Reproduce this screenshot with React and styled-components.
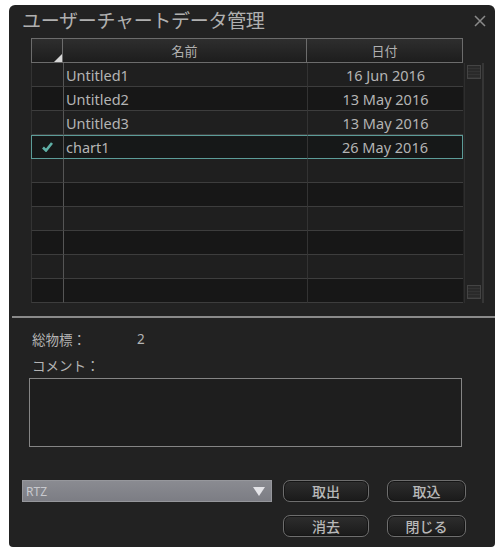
import styled, { createGlobalStyle } from "styled-components";

const GlobalStyle = createGlobalStyle`
  html, body {
    margin: 0;
    padding: 0;
    background: #ffffff;
  }
  body {
    font-family: "Noto Sans", "Noto Sans CJK JP", sans-serif;
  }
`;

const Page = styled.div`
  width: 498px;
  height: 548px;
  padding: 5px 3px 0 9px;
  box-sizing: border-box;
`;

const Dialog = styled.div`
  width: 486px;
  height: 542px;
  background: #222222;
  border-radius: 6px 6px 4px 4px;
  display: flex;
  flex-direction: column;
  color: #b8b8b8;
`;

const TitleBar = styled.div`
  height: 33px;
  display: flex;
  align-items: center;
  justify-content: space-between;
  padding: 0 9px 4px 13px;
  box-sizing: border-box;
`;

const Title = styled.div`
  font-family: "Noto Sans CJK JP", sans-serif;
  font-size: 19px;
  color: #b0b0b0;
  letter-spacing: -0.3px;
`;

const Close = styled.div`
  width: 12px;
  height: 12px;
  display: flex;
  margin-top: 2px;
`;

const TableArea = styled.div`
  display: flex;
  margin-left: 22px;
`;

const Table = styled.div`
  width: 432px;
  display: grid;
  grid-template-columns: 32px 244px 156px;
`;

const HeadCell = styled.div`
  height: 25px;
  box-sizing: border-box;
  border: 1px solid #6c6c6c;
  border-left-width: ${(p) => (p.first ? "1px" : "0")};
  background: linear-gradient(#2e2e2e, #1d1d1d);
  display: flex;
  align-items: ${(p) => (p.corner ? "flex-end" : "center")};
  justify-content: ${(p) => (p.corner ? "flex-end" : "center")};
  font-family: "Noto Sans CJK JP", sans-serif;
  font-size: 13px;
  color: #b0b0b0;
`;

const Cell = styled.div`
  height: 24px;
  box-sizing: border-box;
  background: ${(p) => (p.odd ? "#1f1f1f" : "#171717")};
  border-bottom: 1px solid #3d3d3d;
  border-left: 1px solid ${(p) => p.divider};
  display: flex;
  align-items: center;
  justify-content: ${(p) => p.align || "flex-start"};
  padding-left: ${(p) => (p.pad ? "2px" : "0")};
  font-size: 14.5px;
  color: #b4b4b4;
  white-space: nowrap;
  ${(p) =>
    p.selected &&
    `
    background: #161818;
    border-top: 1px solid #5c9c98;
    border-bottom: 1px solid #5c9c98;
  `}
  ${(p) => p.selected && p.col === 0 && `border-left: 1px solid #5c9c98; padding-left: 10px;`}
  ${(p) => p.selected && p.col === 2 && `border-right: 1px solid #5c9c98;`}
`;

const Scrollbar = styled.div`
  width: 20px;
  height: 240px;
  margin-top: 25px;
  margin-left: 1px;
  box-sizing: border-box;
  border-left: 1px solid #2e2e2e;
  border-right: 2px solid #363636;
  display: flex;
  flex-direction: column;
  justify-content: space-between;
  align-items: center;
  padding: 2px 0 4px;
`;

const ScrollBox = styled.div`
  width: 14px;
  height: 14px;
  box-sizing: border-box;
  border: 1px solid #444;
  background: repeating-linear-gradient(#2a2a2a 0 2px, #333 2px 3px);
`;

const Separator = styled.div`
  height: 2px;
  background: #8a8a8a;
  margin: 13px 0 0 3px;
`;

const Info = styled.div`
  padding: 11px 0 0 23px;
  font-family: "Noto Sans", "Noto Sans CJK JP", sans-serif;
  font-size: 13.5px;
  color: #b4b4b4;
`;

const InfoRow = styled.div`
  display: flex;
  height: ${(p) => p.h || 19}px;
  margin-top: ${(p) => p.gap || 0}px;
  align-items: center;
`;

const Label = styled.span`
  width: ${(p) => p.w || "auto"};
`;

const CommentBox = styled.div`
  width: 433px;
  height: 69px;
  box-sizing: border-box;
  margin: 1px 0 0 20px;
  border: 1px solid #858585;
  background: #1e1e1e;
`;

const Footer = styled.div`
  display: grid;
  grid-template-columns: 250px 86px 86px;
  grid-template-rows: 22px 22px;
  column-gap: 11px;
  row-gap: 13px;
  margin: 33px 0 0 13px;
`;

const Select = styled.div`
  background: linear-gradient(#8a8b91, #7c7d84);
  border: 1px solid #96979c;
  box-sizing: border-box;
  display: flex;
  align-items: center;
  justify-content: space-between;
  padding: 0 6px 0 3px;
  font-size: 12px;
  color: #c8c9ce;
`;

const Button = styled.div`
  box-sizing: border-box;
  border: 1px solid #6e6e6e;
  border-radius: 7px;
  background: linear-gradient(#2e2e2e, #1a1a1a);
  box-shadow: inset 0 0 0 1px #151515;
  display: flex;
  align-items: center;
  justify-content: center;
  font-family: "Noto Sans CJK JP", sans-serif;
  font-size: 14px;
  font-weight: 500;
  color: #b8b8b8;
  grid-column: ${(p) => p.col};
  grid-row: ${(p) => p.row};
  margin-left: ${(p) => p.shift || 0}px;
`;

const rows = [
  { name: "Untitled1", date: "16 Jun 2016" },
  { name: "Untitled2", date: "13 May 2016" },
  { name: "Untitled3", date: "13 May 2016" },
  { name: "chart1", date: "26 May 2016", selected: true },
  {}, {}, {}, {}, {}, {},
];

const Check = () => (
  <svg width="11" height="10" viewBox="0 0 11 10">
    <path d="M1 5.5 L4 8.5 L10 1" stroke="#5fb0a6" strokeWidth="2.6" fill="none" />
  </svg>
);

const App = () => {
  return (
    <Page>
      <GlobalStyle />
      <Dialog>
        <TitleBar>
          <Title>ユーザーチャートデータ管理</Title>
          <Close>
            <svg width="12" height="12" viewBox="0 0 12 12">
              <path d="M1 1 L11 11 M11 1 L1 11" stroke="#8a8a8a" strokeWidth="1.5" />
            </svg>
          </Close>
        </TitleBar>

        <TableArea>
          <Table>
            <HeadCell first corner>
              <svg width="8" height="8" viewBox="0 0 8 8">
                <path d="M8 0 L8 8 L0 8 Z" fill="#d8d8d8" />
              </svg>
            </HeadCell>
            <HeadCell>名前</HeadCell>
            <HeadCell>日付</HeadCell>
            {rows.map((r, i) => {
              const odd = i % 2 === 0;
              return [
                <Cell key={`c${i}`} odd={odd} divider="#333" selected={r.selected} col={0}>
                  {r.selected && <Check />}
                </Cell>,
                <Cell key={`n${i}`} odd={odd} divider="#555" pad selected={r.selected} col={1}>
                  {r.name}
                </Cell>,
                <Cell key={`d${i}`} odd={odd} divider="#333" align="center" selected={r.selected} col={2}>
                  {r.date}
                </Cell>,
              ];
            })}
          </Table>
          <Scrollbar>
            <ScrollBox />
            <ScrollBox />
          </Scrollbar>
        </TableArea>

        <Separator />

        <Info>
          <InfoRow>
            <Label w="105px">総物標：</Label>
            <span>2</span>
          </InfoRow>
          <InfoRow h={24} gap={5}>
            <Label>コメント：</Label>
          </InfoRow>
        </Info>
        <CommentBox />

        <Footer>
          <Select>
            <span>RTZ</span>
            <svg width="12" height="9" viewBox="0 0 12 9">
              <path d="M0 0 L12 0 L6 9 Z" fill="#e4e4e8" />
            </svg>
          </Select>
          <Button col={2} row={1}>取出</Button>
          <Button col={3} row={1} shift={7}>取込</Button>
          <Button col={2} row={2}>消去</Button>
          <Button col={3} row={2} shift={7}>閉じる</Button>
        </Footer>
      </Dialog>
    </Page>
  );
};

export default App;
